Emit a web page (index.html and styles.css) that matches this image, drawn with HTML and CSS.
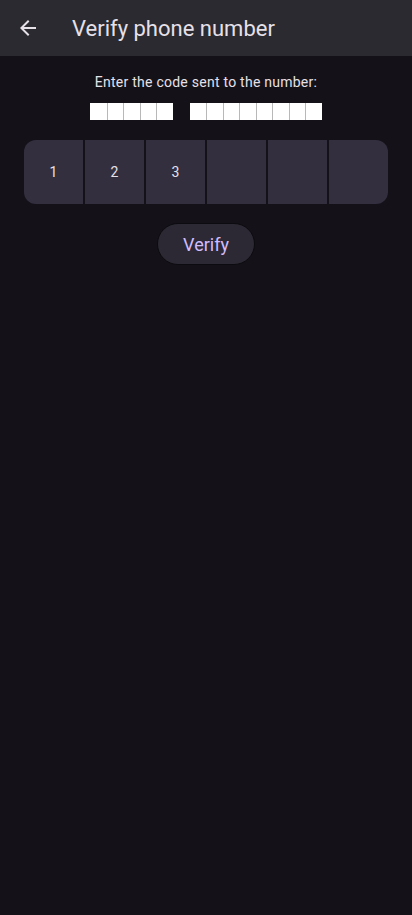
FILE: index.html
```html
<!DOCTYPE html>
<html>
<head>
<meta charset="utf-8">
<link rel="stylesheet" href="styles.css">
</head>
<body>
<header class="appbar">
  <button class="back" aria-label="Back">
    <svg width="24" height="24" viewBox="0 0 24 24"><path d="M20 11H7.83l5.59-5.59L12 4l-8 8 8 8 1.41-1.41L7.83 13H20v-2z" fill="#e6e0e9"/></svg>
  </button>
  <h1 class="title">Verify phone number</h1>
</header>
<main class="content">
  <p class="prompt">Enter the code sent to the number:</p>
  <div class="number">
    <span class="group"><i></i><i></i><i></i><i></i><i></i></span>
    <span class="group"><i></i><i></i><i></i><i></i><i></i><i></i><i></i><i></i></span>
  </div>
  <div class="otp">
    <div class="cell">1</div>
    <div class="cell">2</div>
    <div class="cell">3</div>
    <div class="cell"></div>
    <div class="cell"></div>
    <div class="cell"></div>
  </div>
  <button class="verify">Verify</button>
</main>
</body>
</html>
```
FILE: styles.css
```css
html, body {
  margin: 0;
  padding: 0;
  background: #141218;
  font-family: Roboto, "Noto Sans", sans-serif;
  color: #e6e0e9;
}
.appbar {
  height: 56px;
  background: #2b2a30;
  display: flex;
  align-items: center;
}
.back {
  width: 24px;
  height: 24px;
  margin-left: 16px;
  padding: 0;
  border: 0;
  background: none;
  display: flex;
}
.title {
  margin: 0 0 0 32px;
  font-size: 22px;
  font-weight: 400;
  color: #e6e0e9;
}
.content {
  display: flex;
  flex-direction: column;
  align-items: center;
  padding: 16px 24px;
}
.prompt {
  margin: 0;
  font-size: 14px;
  font-weight: 400;
  letter-spacing: 0.25px;
  line-height: 20px;
  color: #e6e0e9;
}
.number {
  display: flex;
  gap: 17px;
  margin-top: 11px;
  height: 17px;
}
.group {
  display: flex;
  gap: 0;
}
.group i {
  width: 16.5px;
  height: 17px;
  background: #fff;
  border-left: 0.5px solid #b8b8b8;
  box-sizing: border-box;
}
.group i:first-child {
  border-left: 0;
}
.otp {
  margin-top: 20px;
  align-self: stretch;
  display: grid;
  grid-template-columns: repeat(6, 1fr);
  gap: 2px;
  height: 64px;
  border-radius: 12px;
  overflow: hidden;
}
.cell {
  background: #332f3f;
  display: flex;
  align-items: center;
  justify-content: center;
  font-size: 14px;
  font-weight: 400;
  color: #e6e0e9;
}
.verify {
  margin-top: 19px;
  height: 42px;
  padding: 0 25px;
  border-radius: 21px;
  border: 1px solid #0c0b0f;
  background: #2c2934;
  color: #d0bcff;
  font-family: Roboto, "Noto Sans", sans-serif;
  font-size: 18px;
  font-weight: 400;
}
```
